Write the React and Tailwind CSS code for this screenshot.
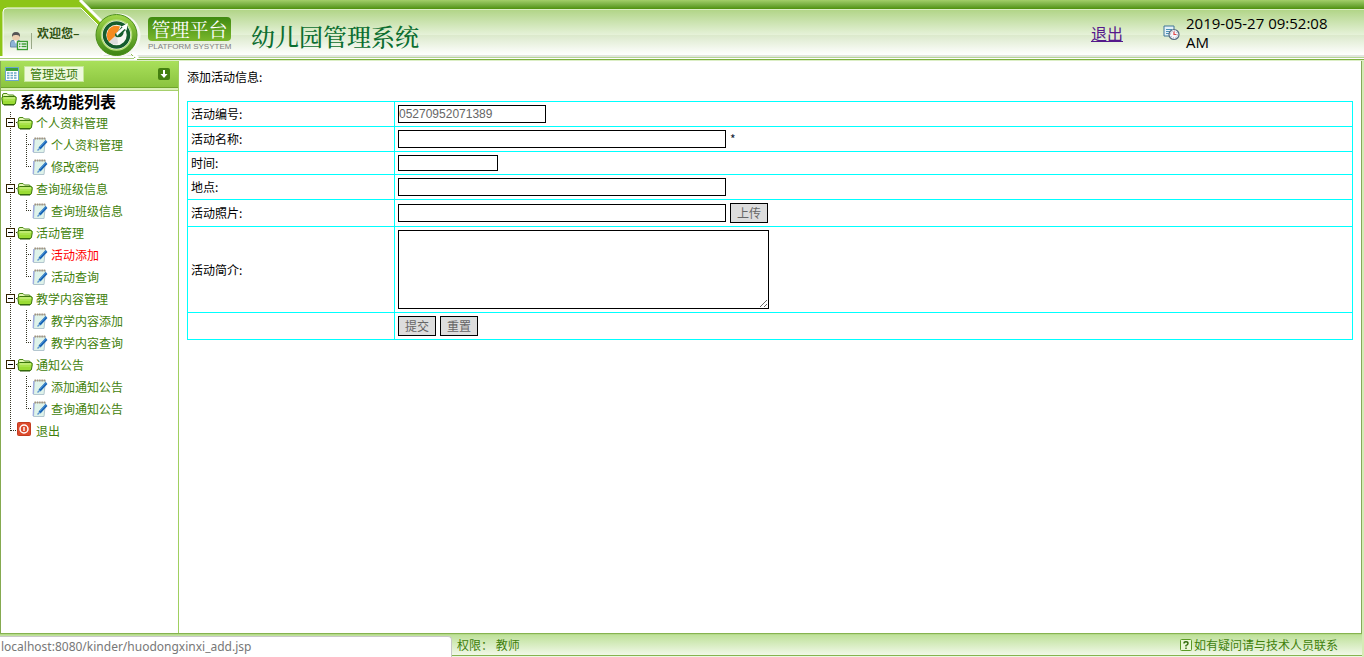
import { useState } from 'react'

const menu = [
  { title: '个人资料管理', items: ['个人资料管理', '修改密码'] },
  { title: '查询班级信息', items: ['查询班级信息'] },
  { title: '活动管理', items: ['活动添加', '活动查询'] },
  { title: '教学内容管理', items: ['教学内容添加', '教学内容查询'] },
  { title: '通知公告', items: ['添加通知公告', '查询通知公告'] },
]

const inputClass = 'border border-black bg-white font-["Liberation_Sans",sans-serif] text-xs text-[#666] outline-none'
const buttonClass = 'h-5 w-[38px] border border-black bg-[#ddd] text-xs leading-4 text-[#666]'

const FolderIcon = () => (
  <svg width="16" height="16" viewBox="0 0 16 16" className="shrink-0">
    <path d="M1.500 11V4Q1.500 2.500 3 2.500h3L7.500 4H12q1.500 0 1.500 2" fill="#e4f7b4" stroke="#4b8a15" />
    <path d="M2.500 13.500Q1.500 13.500 1.500 12L.8 7.500Q.8 5.500 2.500 5.500h11.300q1.700 0 1.500 2l-.8 4.500q-.2 1.500-1.500 1.500z" fill="#9bdc35" stroke="#3a760a" />
    <path d="M2.500 7h11.500" stroke="#e3f9b0" />
    <path d="M2.500 9h11" stroke="#b8ea62" />
    <path d="M3 14h10" stroke="#2c5c08" />
  </svg>
)

const NoteIcon = () => (
  <svg width="16" height="18" viewBox="0 0 16 18" className="shrink-0">
    <path d="M2.500 2.500h11l-1.500 14H1.500z" fill="#dff3ea" stroke="#b3c6cf" />
    <path d="M1.800 3L1.200 16" stroke="#9dabe0" strokeWidth="1.200" />
    <path d="M2.500 2.500h11" stroke="#a3937c" strokeWidth="2" strokeDasharray="1.500 .8" />
    <path d="M14.500 5L7.500 12.500" stroke="#1763b5" strokeWidth="2.600" />
    <path d="M14 4.500L8 11" stroke="#5ba3e2" strokeWidth=".8" />
    <path d="M8 12L5.500 14.500" stroke="#5c95cf" strokeWidth="1.500" />
  </svg>
)

const PowerIcon = () => (
  <svg width="16" height="18" viewBox="0 0 16 18" className="shrink-0">
    <rect x="0.500" y="0.500" width="13" height="13" rx="1" fill="#dc4a2c" stroke="#c33c20" />
    <circle cx="7" cy="7" r="4" fill="none" stroke="#fff" strokeWidth="1.500" />
    <path d="M7 5v4" stroke="#fff" strokeWidth="1.400" />
  </svg>
)

// dotted connector lines of the tree
const Connector = ({ last }) => (
  <svg width="15" height="22" viewBox="0 0 15 22" className="shrink-0" stroke="#332" strokeDasharray="1 1" shapeRendering="crispEdges">
    <path d={last ? 'M9.500 0V11' : 'M9.500 0V22'} />
    <path d="M9 10.500H15" />
  </svg>
)

const Toggle = () => (
  <svg width="15" height="22" viewBox="0 0 15 22" className="shrink-0" shapeRendering="crispEdges">
    <path d="M8.500 0V22M12 10.500h3" stroke="#332" strokeDasharray="1 1" />
    <rect x="4.500" y="6.500" width="8" height="8" fill="#fff" stroke="#332200" />
    <path d="M6 10.500h5" stroke="#000" />
  </svg>
)

const Trunk = ({ last }) => (
  <svg width="15" height="22" viewBox="0 0 15 22" className="shrink-0" stroke="#332" strokeDasharray="1 1" shapeRendering="crispEdges">
    <path d={last ? 'M8.500 0V11M9 10.500H15' : 'M8.500 0V22'} />
  </svg>
)

const UserIcon = () => (
  <svg width="18" height="20" viewBox="0 0 18 20" className="shrink-0">
    <path d="M.5 16V12q0-3 4-3h3q3 0 3 3v4z" fill="#8fb4d8" stroke="#6d8fae" />
    <path d="M4 9l2 4 2-4z" fill="#fff" />
    <circle cx="6" cy="5.500" r="4" fill="#edcfb0" />
    <path d="M2 6Q1.500 1 6 1t4 5Q9 3.500 6 4 3 3.500 2 6z" fill="#555" />
    <rect x="7.500" y="10.500" width="10" height="8" fill="#fff" stroke="#3e9c33" strokeWidth="1.400" />
    <path d="M9 13h1.500m1 0h5M9 15.500h1.500m1 0h5" stroke="#3e9c33" strokeWidth="1.400" />
  </svg>
)

const ClockIcon = () => (
  <svg width="17" height="16" viewBox="0 0 17 16" className="shrink-0">
    <path d="M1 1h10v10H1z" fill="#e4f1f8" stroke="#3f7795" />
    <path d="M3 4.500h6M3 6.500h4M3 8.500h3" stroke="#4b93b8" strokeWidth="1.200" />
    <circle cx="11" cy="9.500" r="5" fill="#f4f5fa" stroke="#566b81" strokeWidth="1.200" />
    <circle cx="11" cy="9.500" r="3.500" fill="none" stroke="#8795a8" strokeDasharray="1 1.700" />
    <path d="M11 6.500v3h2.500" fill="none" stroke="#e04545" strokeWidth="1.200" />
  </svg>
)

const HeaderArt = () => (
  <svg width="150" height="61" viewBox="0 0 150 61" className="absolute left-0 top-0">
    <defs>
      <linearGradient id="panel" x1="0" y1="0" x2="0" y2="1">
        <stop offset="0" stopColor="#a9d178" />
        <stop offset=".5" stopColor="#e2efd3" />
        <stop offset=".58" stopColor="#dbe8ca" />
        <stop offset="1" stopColor="#fdfdfb" />
      </linearGradient>
      <linearGradient id="ring" x1="0" y1="0" x2="0" y2="1">
        <stop offset="0" stopColor="#a2d84a" />
        <stop offset="1" stopColor="#3c8414" />
      </linearGradient>
    </defs>
    <path d="M0 0H80L102 22 90 57H0z" fill="#8dc517" />
    <path d="M3 57V12q0-4 4-4h74l22 22v27z" fill="url(#panel)" stroke="#fff" />
    <path d="M80 0L102 22M128 48L138 58" stroke="#fff" strokeWidth="3" />
    <path d="M131 54L137 60" stroke="#8fc050" />
    <path d="M0 57h134M0 59h137" stroke="#fff" strokeWidth="2" />
    <path d="M0 58.500h134" stroke="#a9cd7c" />
    <circle cx="118.500" cy="35.500" r="22" fill="#f6f8f3" />
    <circle cx="116.500" cy="35" r="20.500" fill="url(#ring)" stroke="#4b8e1a" />
    <circle cx="116.500" cy="35" r="15" fill="#fff" stroke="#b5de7a" strokeWidth="1.500" />
    <circle cx="116.500" cy="35" r="12" fill="#f7f7f2" stroke="#155c2c" strokeWidth="3.500" />
    <path d="M117 34.500L109 42Q105 36 108.500 29.500 113 24 120 26.500z" fill="#f58a20" />
    <path d="M117 34.500L109 42Q113 46 118 43.500z" fill="#dedede" />
    <path d="M118 35.500L126 25" stroke="#155c2c" strokeWidth="5" />
    <path d="M116 35L126 26" stroke="#fff" strokeWidth="2.500" />
    <path d="M121.500 26.500l6.500-3.500-1.500 7.500z" fill="#fff" />
    <path d="M116 33.500q-1 3 2 3 4 0 5-4" fill="none" stroke="#155c2c" strokeWidth="1.500" />
  </svg>
)

const Header = () => (
  <header className="relative flex h-[61px] shrink-0 flex-col">
    <div className="h-[9px] bg-linear-to-b from-[#a3cf6a] to-[#4f9107]" />
    <div className="h-[26px] border-t border-[#dcedc8] bg-linear-to-b from-[#b2d588] to-[#e6f2d9]" />
    <div className="h-5 bg-linear-to-b from-[#dbe9cb] to-white" />
    <div className="h-[2px] bg-[#e2e6de]" />
    <div className="h-[2px] border-t border-[#b4d494] bg-white" />
    <div className="h-[2px] border-t border-[#7fb040] bg-[#dceec6]" />
    <HeaderArt />
    <div className="absolute inset-0 flex items-center">
      <div className="flex w-[148px] shrink-0 items-center pt-5 pl-[10px]">
        <UserIcon />
        <span className="ml-[3px] h-4 border-l border-[#9aa888]" />
        <span className="mb-4 ml-[5px] text-xs font-bold leading-4 text-[#2f5212]">欢迎您–</span>
      </div>
      <div className="flex w-[83px] flex-col pt-2">
        <span className="h-6 rounded bg-linear-to-b from-[#3f8a10] to-[#79b72c] text-center font-['Noto_Serif_CJK_SC','Noto_Sans_CJK_SC',serif] text-[19px] leading-6 text-white">管理平台</span>
        <span className="text-center font-['Liberation_Sans',sans-serif] text-[8px] leading-3 whitespace-nowrap text-[#808080]">PLATFORM SYSYTEM</span>
      </div>
      <h1 className="ml-5 pt-[10px] font-['Noto_Serif_CJK_SC','Noto_Sans_CJK_SC',serif] text-2xl font-medium leading-8 text-[#0c6e30]">幼儿园管理系统</h1>
      <a href="#logout" className="ml-auto pt-1 text-base leading-6 text-[#551a8b] underline">退出</a>
      <div className="ml-10 flex items-center gap-[6px] pt-1">
        <ClockIcon />
        <time className="w-[178px] pr-6 font-['Open_Sans','Noto_Sans_CJK_SC',sans-serif] text-[15px] leading-[19px] text-black">2019-05-27 09:52:08 AM</time>
      </div>
    </div>
  </header>
)

const Sidebar = ({ active, onSelect }) => (
  <aside className="w-[179px] shrink-0 border-r border-l border-r-[#a0cf60] border-l-[#85aa50]">
    <div className="flex h-[27px] items-center border-b border-[#6fa52c] bg-linear-to-b from-[#a9e05a] to-[#8bc43f] px-1">
      <svg width="14" height="14" viewBox="0 0 14 14">
        <rect x=".5" y=".5" width="13" height="13" fill="#fff" stroke="#6ba6cd" />
        <path d="M1 2.500h12" stroke="#3aa03a" strokeWidth="3" />
        <path d="M2 6h10M2 8.500h10M2 11h10" stroke="#69a8c8" strokeWidth="1.500" strokeDasharray="2.500 1" />
      </svg>
      <span className="ml-[5px] border border-[#c7e89a] bg-[#eef9dc] px-[5px] text-xs leading-[14px] text-[#3b7a0c]">管理选项</span>
      <svg width="12" height="12" viewBox="0 0 12 12" className="mr-1 ml-auto">
        <rect width="12" height="12" rx="2" fill="#448010" />
        <path d="M6 2v5" stroke="#fff" strokeWidth="2" />
        <path d="M2.500 6h7L6 10z" fill="#fff" />
      </svg>
    </div>
    <div className="h-[3px] border-b border-[#a6cf6c] bg-[#d9f0b4]" />
    <h2 className="flex h-[21px] items-start gap-[3px] text-base leading-[21px] font-bold text-black"><FolderIcon />系统功能列表</h2>
    <ul className="pl-px text-xs leading-[22px] text-[#3f7f0c]">
      {menu.map((group, g) => (
        <li key={group.title}>
          <div className="flex h-[22px] items-center"><Toggle /><FolderIcon /><span className="ml-[3px]">{group.title}</span></div>
          <ul>
            {group.items.map((item, i) => (
              <li key={item} className="flex h-[22px] items-center">
                <Trunk />
                <Connector last={i === group.items.length - 1} />
                <NoteIcon />
                <a
                  href={`#${g}-${i}`}
                  onClick={() => onSelect(`${g}-${i}`)}
                  className={active === `${g}-${i}` ? 'ml-[3px] text-[#f00]' : 'ml-[3px]'}
                >
                  {item}
                </a>
              </li>
            ))}
          </ul>
        </li>
      ))}
      <li className="flex h-[22px] items-center"><Trunk last /><PowerIcon /><a href="#logout" className="ml-[3px]">退出</a></li>
    </ul>
  </aside>
)

const Row = ({ label, id, children }) => (
  <tr>
    <th scope="row" className="border border-[#0ff] px-[3px] py-0 text-left font-normal">
      {label && <label htmlFor={id}>{label}:</label>}
    </th>
    <td className="border border-[#0ff] p-[3px]">
      <div className="flex items-center gap-1">{children}</div>
    </td>
  </tr>
)

const ActivityForm = () => (
  <form onSubmit={(e) => e.preventDefault()}>
    <table className="w-full table-fixed border-collapse text-xs leading-4 text-black">
      <colgroup>
        <col className="w-[207px]" />
        <col />
      </colgroup>
      <tbody>
        <Row label="活动编号" id="bianhao">
          <input id="bianhao" defaultValue="05270952071389" className={`${inputClass} h-[18px] w-[148px]`} />
        </Row>
        <Row label="活动名称" id="mingcheng">
          <input id="mingcheng" className={`${inputClass} h-[18px] w-[328px]`} />
          <span className="leading-[18px] text-[#123]">*</span>
        </Row>
        <Row label="时间" id="shijian">
          <input id="shijian" className={`${inputClass} h-4 w-[100px]`} />
        </Row>
        <Row label="地点" id="didian">
          <input id="didian" className={`${inputClass} h-[18px] w-[328px]`} />
        </Row>
        <Row label="活动照片" id="zhaopian">
          <input id="zhaopian" className={`${inputClass} h-[18px] w-[328px]`} />
          <button type="button" className={buttonClass}>上传</button>
        </Row>
        <Row label="活动简介" id="jianjie">
          <textarea id="jianjie" className={`${inputClass} h-[79px] w-[371px]`} />
        </Row>
        <Row>
          <button type="submit" className={buttonClass}>提交</button>
          <button type="reset" className={buttonClass}>重置</button>
        </Row>
      </tbody>
    </table>
  </form>
)

const Footer = () => (
  <footer className="flex h-6 shrink-0 flex-col border-r-2 border-[#d5ebb5] text-xs text-[#3f7f0c]">
    <div className="h-[2px] border-t border-[#86b350] bg-[#b4d98a]" />
    <div className="flex h-5 items-center justify-between bg-linear-to-b from-[#bfe19a] to-[#f1f8e8] pr-6 pl-[457px]">
      <p>权限：&nbsp;教师</p>
      <p className="flex items-center gap-[2px]">
        <svg width="12" height="12" viewBox="0 0 12 12">
          <rect x=".5" y=".5" width="11" height="11" rx="1" fill="#eaf7d6" stroke="#5b9a25" />
          <path d="M4 4.500Q4 2.800 6 2.800t2 1.600q0 1-2 2.100v1M6 8.500v1.500" fill="none" stroke="#2f6a08" strokeWidth="1.400" />
        </svg>
        如有疑问请与技术人员联系
      </p>
    </div>
    <div className="h-[2px] border-t border-[#86b350] bg-[#eef6e4]" />
  </footer>
)

const App = () => {
  const [active, setActive] = useState('2-0')

  return (
    <div className="flex min-h-screen flex-col bg-white font-['Noto_Sans_CJK_SC',sans-serif]">
      <Header />
      <div className="flex grow">
        <Sidebar active={active} onSelect={setActive} />
        <main className="min-w-0 grow px-2 pt-2">
          <p className="mb-4 text-xs leading-4 text-black">添加活动信息:</p>
          <ActivityForm />
        </main>
        <div className="w-[3px] shrink-0 border-l border-[#86a85a] bg-[#d5ebb5]" />
      </div>
      <Footer />

      {/* link preview bubble */}
      <div className="fixed bottom-0 left-0 h-[21px] w-[452px] rounded-tr border-t border-r border-[#c8c8c8] bg-white pl-px font-['Noto_Sans',sans-serif] text-xs leading-5 text-[#777]">
        localhost:8080/kinder/huodongxinxi_add.jsp
      </div>
    </div>
  )
}

export default App
